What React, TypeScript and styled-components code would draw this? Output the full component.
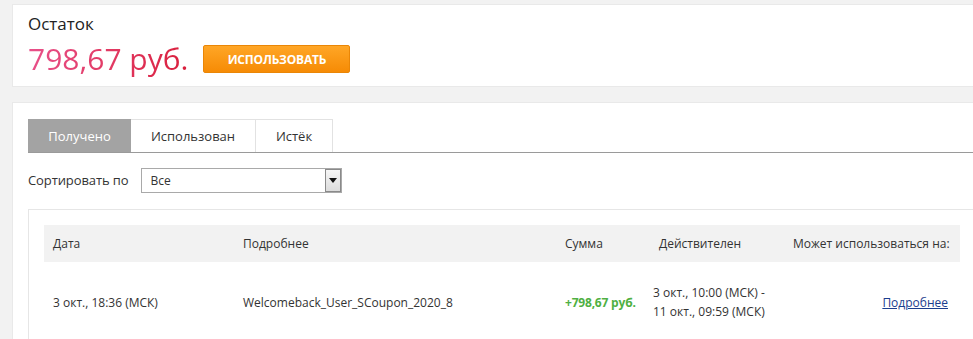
import React from "react"
import styled, { createGlobalStyle } from "styled-components"

const GlobalStyle = createGlobalStyle`
  html, body {
    margin: 0;
    padding: 0;
    background: #f2f2f2;
    font-family: "Open Sans", "Noto Sans", sans-serif;
    color: #333;
    overflow: hidden;
  }
`

const Page = styled.div`
  width: 1000px;
  height: 335px;
  overflow: hidden;
  padding: 4px 0 0 12px;
`

const Card = styled.div<{ $padding: string; $gap?: string }>`
  background: #fff;
  border: 1px solid #e9e9e9;
  padding: ${p => p.$padding};
  margin-bottom: ${p => p.$gap || "0"};
`

const BalanceTitle = styled.div`
  font-size: 17px;
  line-height: 22px;
  color: #222;
`

const PriceRow = styled.div`
  display: flex;
  align-items: center;
  gap: 15px;
  margin-top: 2px;
  height: 44px;
`

const Price = styled.div`
  font-size: 30px;
  line-height: 44px;
  background: linear-gradient(90deg, #e8508a 0%, #e23a64 50%, #d91f3c 100%);
  -webkit-background-clip: text;
  background-clip: text;
  color: transparent;
`

const UseButton = styled.button`
  width: 147px;
  height: 28px;
  border: 1px solid #ea8606;
  border-radius: 2px;
  background: linear-gradient(#ffa626, #f68b05);
  color: #fff;
  font-family: "Open Sans", sans-serif;
  font-weight: 700;
  font-size: 12px;
  letter-spacing: -0.2px;
  padding: 0;
`

const Tabs = styled.div`
  display: flex;
  border-bottom: 1px solid #9a9a9a;
  height: 33px;
`

const Tab = styled.div<{ $width: number; $active?: boolean }>`
  width: ${p => p.$width}px;
  box-sizing: border-box;
  display: flex;
  align-items: center;
  justify-content: center;
  font-size: 13px;
  border: 1px solid ${p => (p.$active ? "#a3a3a3" : "#e2e2e2")};
  border-bottom: none;
  border-left: ${p => (p.$active ? undefined : "none")};
  background: ${p => (p.$active ? "#a3a3a3" : "#fff")};
  color: ${p => (p.$active ? "#fff" : "#333")};
`

const SortRow = styled.div`
  display: flex;
  align-items: center;
  gap: 13px;
  margin-top: 15px;
  font-size: 13px;
`

const SortLabel = styled.span`
  margin-top: -2px;
  letter-spacing: -0.1px;
`

const Select = styled.div`
  width: 201px;
  height: 25px;
  box-sizing: border-box;
  border: 1px solid #a9a9a9;
  display: flex;
  align-items: center;
  font-size: 12px;
  padding-left: 8px;
  position: relative;
`

const SelectArrow = styled.div`
  position: absolute;
  right: 0;
  top: 0;
  width: 16px;
  height: 23px;
  box-sizing: border-box;
  border: 1px solid #8a8a8a;
  background: linear-gradient(#f6f6f6, #dcdcdc);
  display: flex;
  align-items: center;
  justify-content: center;
`

const Panel = styled.div`
  margin-top: 16px;
  border: 1px solid #e6e6e6;
  border-right: none;
  padding: 15px 0 0 15px;
  height: 140px;
`

const TableGrid = styled.div<{ $header?: boolean }>`
  width: 916px;
  box-sizing: border-box;
  display: grid;
  grid-template-columns: 190px 322px 88px 140px 1fr;
  align-items: center;
  padding: 0 10px 0 9px;
  height: ${p => (p.$header ? "37px" : "80px")};
  background: ${p => (p.$header ? "#f2f2f2" : "#fff")};
  font-size: 12px;
  color: #333;
`

const Cell = styled.div<{ $indent?: number; $right?: number }>`
  padding-left: ${p => p.$indent || 0}px;
  padding-right: ${p => p.$right || 0}px;
  text-align: ${p => (p.$right ? "right" : "left")};
  line-height: 19px;
  white-space: nowrap;
`

const Amount = styled.span`
  color: #4fb043;
  font-weight: 700;
  font-size: 12px;
  letter-spacing: -0.2px;
`

const DetailsLink = styled.a`
  color: #1b3d8e;
  text-decoration: underline;
`

export default function App() {
  return (
    <>
      <GlobalStyle />
      <Page>
        <Card $padding="8px 15px 5px 15px" $gap="15px">
          <BalanceTitle>Остаток</BalanceTitle>
          <PriceRow>
            <Price>798,67 руб.</Price>
            <UseButton>ИСПОЛЬЗОВАТЬ</UseButton>
          </PriceRow>
        </Card>
        <Card $padding="16px 0 0 15px">
          <Tabs>
            <Tab $width={103} $active>Получено</Tab>
            <Tab $width={125}>Использован</Tab>
            <Tab $width={77}>Истёк</Tab>
          </Tabs>
          <SortRow>
            <SortLabel>Сортировать по</SortLabel>
            <Select>
              Все
              <SelectArrow>
                <svg width="8" height="5" viewBox="0 0 8 5">
                  <path d="M0 0 H8 L4 5 Z" fill="#111" />
                </svg>
              </SelectArrow>
            </Select>
          </SortRow>
          <Panel>
            <TableGrid $header>
              <Cell>Дата</Cell>
              <Cell>Подробнее</Cell>
              <Cell>Сумма</Cell>
              <Cell $indent={6}>Действителен</Cell>
              <Cell>Может использоваться на:</Cell>
            </TableGrid>
            <TableGrid>
              <Cell>3 окт., 18:36 (МСК)</Cell>
              <Cell>Welcomeback_User_SCoupon_2020_8</Cell>
              <Cell><Amount>+798,67 руб.</Amount></Cell>
              <Cell>3 окт., 10:00 (МСК) -<br />11 окт., 09:59 (МСК)</Cell>
              <Cell $right={2}><DetailsLink href="#">Подробнее</DetailsLink></Cell>
            </TableGrid>
          </Panel>
        </Card>
      </Page>
    </>
  )
}
